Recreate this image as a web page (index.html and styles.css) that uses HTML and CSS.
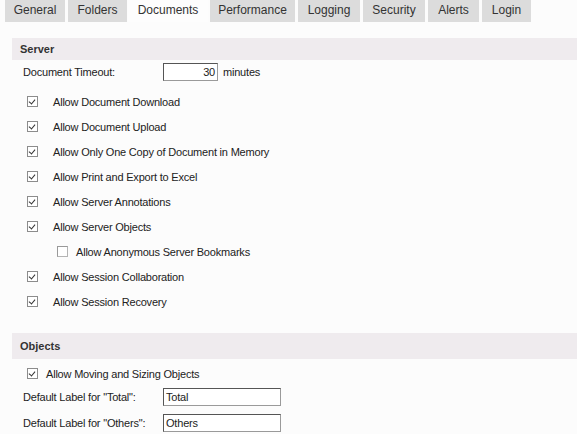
FILE: index.html
```html
<!DOCTYPE html>
<html>
<head>
<meta charset="utf-8">
<link rel="stylesheet" href="styles.css">
</head>
<body>
<div class="tabs">
  <div class="tab t-general">General</div>
  <div class="tab t-folders">Folders</div>
  <div class="tab active t-documents">Documents</div>
  <div class="tab t-performance">Performance</div>
  <div class="tab t-logging">Logging</div>
  <div class="tab t-security">Security</div>
  <div class="tab t-alerts">Alerts</div>
  <div class="tab t-login">Login</div>
</div>
<div class="panel">
  <div class="section-head head-server">Server</div>
  <div class="field-row timeout-row">
    <span class="field-label">Document Timeout:</span>
    <span class="input num">30</span>
    <span class="unit">minutes</span>
  </div>
  <div class="checks">
    <div class="check-row"><span class="cb on"></span><span class="cb-label">Allow Document Download</span></div>
    <div class="check-row"><span class="cb on"></span><span class="cb-label">Allow Document Upload</span></div>
    <div class="check-row"><span class="cb on"></span><span class="cb-label">Allow Only One Copy of Document in Memory</span></div>
    <div class="check-row"><span class="cb on"></span><span class="cb-label">Allow Print and Export to Excel</span></div>
    <div class="check-row"><span class="cb on"></span><span class="cb-label">Allow Server Annotations</span></div>
    <div class="check-row"><span class="cb on"></span><span class="cb-label">Allow Server Objects</span></div>
    <div class="check-row nested"><span class="cb off"></span><span class="cb-label">Allow Anonymous Server Bookmarks</span></div>
    <div class="check-row"><span class="cb on"></span><span class="cb-label">Allow Session Collaboration</span></div>
    <div class="check-row"><span class="cb on"></span><span class="cb-label">Allow Session Recovery</span></div>
  </div>
  <div class="section-head head-objects">Objects</div>
  <div class="check-row tight"><span class="cb on"></span><span class="cb-label">Allow Moving and Sizing Objects</span></div>
  <div class="field-row label-row">
    <span class="field-label">Default Label for "Total":</span>
    <span class="input text">Total</span>
  </div>
  <div class="field-row label-row second">
    <span class="field-label">Default Label for "Others":</span>
    <span class="input text">Others</span>
  </div>
</div>
</body>
</html>
```

FILE: styles.css
```css
html, body {
  margin: 0;
  padding: 0;
  background: #fcfcfc;
}
body {
  width: 577px;
  height: 434px;
  overflow: hidden;
  font-family: "Liberation Sans", Arial, sans-serif;
  font-size: 11px;
  color: #222;
}
.tabs {
  display: flex;
  gap: 3px;
  padding-left: 5px;
  height: 22px;
}
.tab {
  background: #dcdcdc;
  color: #333;
  font-size: 12px;
  line-height: 20px;
  text-align: center;
  height: 22px;
  box-sizing: border-box;
}
.tab.active {
  background: #fdfdfd;
}
.t-general { width: 60px; }
.t-folders { width: 59px; }
.t-documents { width: 80px; margin-left: -2px; }
.t-performance { width: 85px; margin-left: -1px; }
.t-logging { width: 62px; }
.t-security { width: 62px; }
.t-alerts { width: 51px; }
.t-login { width: 49px; }

.panel {
  padding-top: 16px;
  letter-spacing: -0.2px;
}
.section-head {
  margin-left: 12px;
  background: #efebee;
  font-weight: bold;
  padding-left: 8px;
  color: #333;
  letter-spacing: 0;
}
.head-server {
  height: 22px;
  line-height: 22px;
}
.head-objects {
  margin-top: 19px;
  height: 26px;
  line-height: 26px;
}
.field-row {
  display: flex;
  align-items: center;
  padding-left: 23px;
}
.field-label {
  width: 140px;
  flex: none;
}
.timeout-row {
  margin-top: 3px;
  height: 17px;
}
.input {
  box-sizing: border-box;
  height: 18px;
  line-height: 16px;
  background: #fff;
  border: 1px solid #9a9a9a;
  border-top-color: #555;
  border-left-color: #555;
  color: #222;
}
.input.num {
  width: 55px;
  text-align: right;
  padding-right: 2px;
}
.unit {
  margin-left: 5px;
}
.input.text {
  width: 118px;
  padding-left: 2px;
}
.label-row {
  height: 18px;
}
.label-row.second {
  margin-top: 8px;
}
.checks {
  margin-top: 9px;
}
.check-row {
  display: flex;
  align-items: center;
  height: 25px;
  padding-left: 27px;
}
.check-row.nested {
  padding-left: 57px;
}
.check-row.nested .cb-label {
  margin-left: 8px;
}
.check-row.tight {
  height: 29px;
}
.check-row.tight .cb-label {
  margin-left: 8px;
}
.cb {
  box-sizing: border-box;
  width: 11px;
  height: 11px;
  flex: none;
  border: 1px solid #8c8c8c;
  background: #fff;
  position: relative;
}
.cb.off {
  border-color: #b4b4b4;
  border-top-color: #999;
  border-left-color: #999;
}
.cb.on::after {
  content: "";
  position: absolute;
  left: 2px;
  top: 1px;
  width: 3px;
  height: 5px;
  border: solid #333;
  border-width: 0 1px 1px 0;
  transform: rotate(40deg);
}
.cb-label {
  margin-left: 15px;
  white-space: nowrap;
}
```
